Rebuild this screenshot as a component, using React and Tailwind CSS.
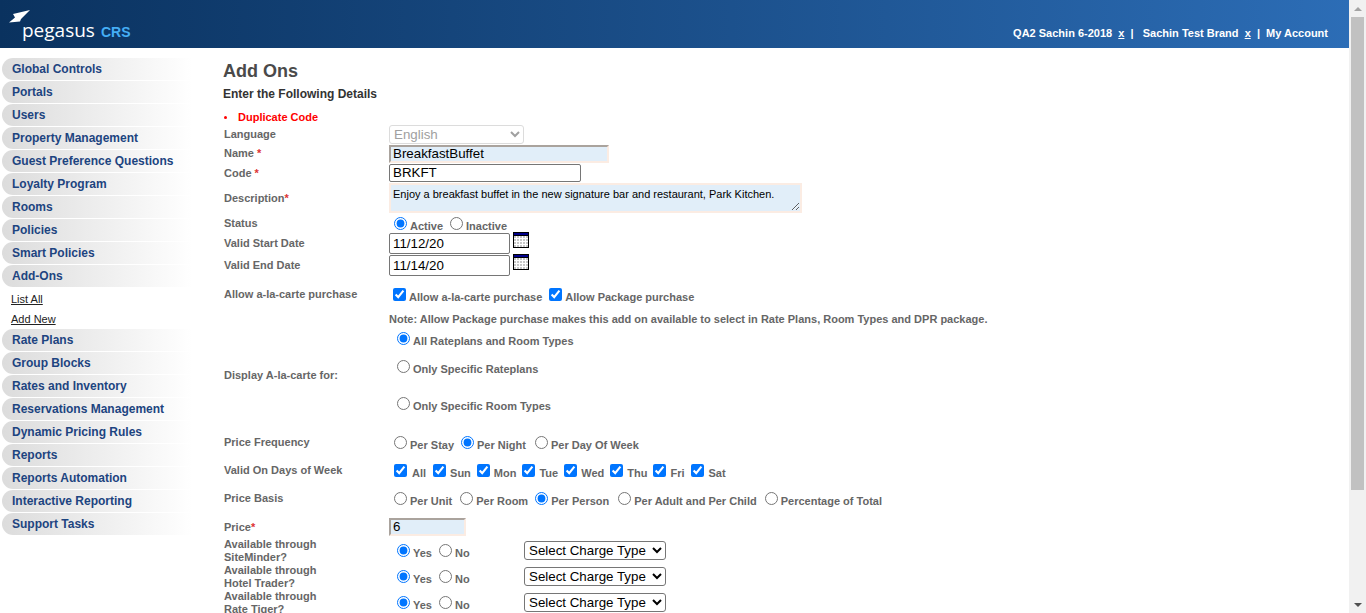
const menuTop = [
	"Global Controls",
	"Portals",
	"Users",
	"Property Management",
	"Guest Preference Questions",
	"Loyalty Program",
	"Rooms",
	"Policies",
	"Smart Policies",
	"Add-Ons",
];

const menuBottom = [
	"Rate Plans",
	"Group Blocks",
	"Rates and Inventory",
	"Reservations Management",
	"Dynamic Pricing Rules",
	"Reports",
	"Reports Automation",
	"Interactive Reporting",
	"Support Tasks",
];

const days = [
	["Sun", "mr-[6px]"],
	["Mon", "mr-[6px]"],
	["Tue", "mr-[6px]"],
	["Wed", "mr-[6px]"],
	["Thu", "mr-[6px]"],
	["Fri", "mr-[7px]"],
	["Sat", "mr-0"],
];

const MenuItem = ({ label }) => (
	<div className="h-[22px] mb-px rounded-l-[11px] bg-gradient-to-r from-[#dcdcdc] to-white flex items-center pl-[10px] text-[12px] font-bold text-[#1d4480]">
		{label}
	</div>
);

const Row = ({ label, h, children, star, labelClass = "", className = "" }) => (
	<div className={`flex ${h}`}>
		<div className={`w-[165px] shrink-0 flex items-center text-[11px] font-bold text-[#666] leading-[13px] ${labelClass}`}>
			<span>
				{label}
				{star && <span className="text-[#d33]">{star}</span>}
			</span>
		</div>
		<div className={`flex-1 flex items-center ${className}`}>{children}</div>
	</div>
);

const Radio = ({ name, label, checked, className = "" }) => (
	<label className={`inline-flex items-center text-[11px] font-bold text-[#666] ${className}`}>
		<input type="radio" name={name} defaultChecked={checked} className="mr-[3px] -mt-[3px]" />
		<span className="mt-[3px]">{label}</span>
	</label>
);

const Check = ({ label, className = "", textClass = "" }) => (
	<label className={`inline-flex items-center text-[11px] font-bold text-[#666] ${className}`}>
		<input type="checkbox" defaultChecked className="mr-[3px] -mt-[3px]" />
		<span className={`mt-[3px] ${textClass}`}>{label}</span>
	</label>
);

const CalendarIcon = () => (
	<svg width="16" height="16" viewBox="0 0 16 16" className="ml-[3px] -mt-[7px]">
		<rect width="16" height="16" fill="#000" />
		<rect x="1" y="1" width="14" height="2" fill="#00008b" />
		<rect x="1" y="4" width="14" height="11" fill="#c8c8c8" />
		<path d="M3.5 4v11M6.5 4v11M9.5 4v11M12.5 4v11M1 6.5h14M1 9.5h14M1 12.5h14" stroke="#fff" strokeWidth="1" />
	</svg>
);

const Channel = ({ id, first, second }) => (
	<div className="flex h-[26px]">
		<div className="w-[165px] shrink-0 flex items-center pt-[3px] text-[11px] font-bold text-[#666] leading-[13px]">
			<span>
				{first}
				<br />
				{second}
			</span>
		</div>
		<div className="flex-1 flex items-center pl-[8px]">
			<div className="w-[127px] flex items-center pt-[6px]">
				<Radio name={id} label="Yes" checked className="mr-[7px]" />
				<Radio name={id} label="No" />
			</div>
			<select className="h-[19px] w-[142px] mt-[2px] border border-[#767676] rounded-[3px] text-[13.33px] text-black">
				<option>Select Charge Type</option>
			</select>
		</div>
	</div>
);

const App = () => {
	return (
		<div className="flex h-screen overflow-hidden bg-white font-['Liberation_Sans',Arial,sans-serif]">
			<div className="flex-1 min-w-0 flex flex-col">
				{/* HEADER */}
				<header className="h-[48px] shrink-0 bg-gradient-to-r from-[#0a325f] to-[#2c6db6] flex justify-between">
					<div className="relative w-[200px]">
						<svg width="22" height="13" viewBox="0 0 22 13" className="absolute left-[9px] top-[10px]">
							<path d="M4 4 L21 0 L12 9 L11 11.5 L0 12.5 L6 7.5 Z" fill="#fff" />
						</svg>
						<div className="absolute left-[22px] top-[17px] flex items-baseline">
							<span className="font-['Open_Sans',sans-serif] text-[19px] font-medium leading-[26px] text-white">pegasus</span>
							<span className="ml-[6px] text-[14px] font-bold text-[#45aef5]">CRS</span>
						</div>
					</div>
					<div className="pt-[26px] pr-[21px] text-[11px] font-bold text-white leading-[14px] whitespace-pre">
						{"QA2 Sachin 6-2018  "}
						<span className="underline">x</span>
						{"  |   Sachin Test Brand  "}
						<span className="underline">x</span>
						{"  |  My Account"}
					</div>
				</header>

				<div className="flex-1 flex min-h-0">
					{/* SIDEBAR */}
					<nav className="w-[190px] ml-[2px] pt-[10px] shrink-0">
						{menuTop.map((m) => (
							<MenuItem key={m} label={m} />
						))}
						<div className="pl-[9px] pt-px text-[11px] text-[#222] leading-[20px]">
							<div className="underline">List All</div>
							<div className="underline">Add New</div>
						</div>
						{menuBottom.map((m) => (
							<MenuItem key={m} label={m} />
						))}
					</nav>

					{/* FORM */}
					<main className="flex-1 min-w-0 pl-[32px] pt-[13px] overflow-hidden">
						<h1 className="-ml-px text-[18px] font-bold text-[#4a4a4a] leading-[20px]">Add Ons</h1>
						<p className="-ml-px mt-[6px] text-[12px] font-bold text-[#333] leading-[14px]">Enter the Following Details</p>
						<div className="mt-[9px] h-[14px] flex items-center text-[11px] font-bold text-[#f00] leading-[14px]">
							<span className="w-[3px] h-[3px] rounded-full bg-[#f00] mr-[11px] mt-px"></span>
							Duplicate Code
						</div>

						<Row label="Language" h="h-[20px]">
							<select disabled className="h-[19px] w-[135px] border border-[#dcdcdc] rounded-[3px] text-[13.33px] text-[#a0a0a0]">
								<option>English</option>
							</select>
						</Row>
						<Row label="Name " star="*" h="h-[19px]">
							<input defaultValue="BreakfastBuffet" className="h-[18px] w-[220px] bg-[#e1eef9] border-2 border-[#fbece3] border-t-[#aaa39d] border-l-[#aaa39d] text-[13.33px] text-black pl-[2px]" />
						</Row>
						<Row label="Code " star="*" h="h-[19px]" labelClass="pt-[2px]">
							<input defaultValue="BRKFT" className="h-[18px] w-[192px] min-w-[192px] shrink-0 border border-[#767676] rounded-[2px] text-[13.33px] text-black pl-[3px]" />
						</Row>
						<Row label="Description" star="*" h="h-[31px]" labelClass="pt-[2px]">
							<textarea
								defaultValue="Enjoy a breakfast buffet in the new signature bar and restaurant, Park Kitchen."
								className="h-[30px] w-[413px] bg-[#e1eef9] border-2 border-[#fbece3] text-[11px] text-black pl-[2px] pt-[3px] leading-[13px]"
							/>
						</Row>
						<Row label="Status" h="h-[19px]" labelClass="pt-[2px]" className="pt-[4px]">
							<Radio name="status" label="Active" checked className="ml-[5px] mr-[7px]" />
							<Radio name="status" label="Inactive" />
						</Row>
						<Row label="Valid Start Date" h="h-[22px]">
							<input defaultValue="11/12/20" className="h-[21px] w-[121px] border border-[#767676] rounded-[2px] text-[13.33px] text-black pl-[3px]" />
							<CalendarIcon />
						</Row>
						<Row label="Valid End Date" h="h-[22px]">
							<input defaultValue="11/14/20" className="h-[21px] w-[121px] border border-[#767676] rounded-[2px] text-[13.33px] text-black pl-[3px]" />
							<CalendarIcon />
						</Row>

						<div className="flex mt-[8px] h-[22px]">
							<div className="w-[165px] shrink-0 flex items-center pb-[2px] text-[11px] font-bold text-[#666]">Allow a-la-carte purchase</div>
							<div className="flex-1 flex items-center pl-[4px] pt-[2px]">
								<Check label="Allow a-la-carte purchase" className="mr-[7px]" />
								<Check label="Allow Package purchase" />
							</div>
						</div>
						<div className="pl-[165px] mt-[6px] h-[14px] text-[11px] font-bold text-[#666] leading-[14px]">
							Note: Allow Package purchase makes this add on available to select in Rate Plans, Room Types and DPR package.
						</div>

						<div className="flex mt-px h-[91px]">
							<div className="w-[165px] shrink-0 flex items-center pt-[6px] text-[11px] font-bold text-[#666]">Display A-la-carte for:</div>
							<div className="flex-1 flex flex-col pl-[8px]">
								<div className="h-[26px] flex items-center"><Radio name="display" label="All Rateplans and Room Types" checked /></div>
								<div className="h-[28px] mt-[2px] flex items-center"><Radio name="display" label="Only Specific Rateplans" /></div>
								<div className="h-[28px] mt-[10px] flex items-center"><Radio name="display" label="Only Specific Room Types" /></div>
							</div>
						</div>

						<Row label="Price Frequency" h="h-[28px] mt-[10px]" className="pl-[5px] pt-[4px]">
							<Radio name="freq" label="Per Stay" className="mr-[7px]" />
							<Radio name="freq" label="Per Night" checked className="mr-[9px]" />
							<Radio name="freq" label="Per Day Of Week" />
						</Row>
						<Row label="Valid On Days of Week" h="h-[28px]" className="pl-[5px] pt-[4px]">
							<Check label="All" textClass="ml-[2px]" className="mr-[7px]" />
							{days.map(([d, gap]) => (
								<Check key={d} label={d} className={gap} textClass="ml-px" />
							))}
						</Row>
						<Row label="Price Basis" h="h-[28px]" className="pl-[5px] pt-[4px]">
							<Radio name="basis" label="Per Unit" className="mr-[8px]" />
							<Radio name="basis" label="Per Room" className="mr-[7px]" />
							<Radio name="basis" label="Per Person" checked className="mr-[9px]" />
							<Radio name="basis" label="Per Adult and Per Child" className="mr-[8px]" />
							<Radio name="basis" label="Percentage of Total" />
						</Row>
						<Row label="Price" star="*" h="h-[19px] mt-[5px]" labelClass="pt-[2px]">
							<input defaultValue="6" className="h-[18px] w-[77px] bg-[#e1eef9] border-2 border-[#fbece3] border-t-[#aaa39d] border-l-[#aaa39d] text-[13.33px] text-black pl-[2px]" />
						</Row>
						<Channel id="site" first="Available through" second="SiteMinder?" />
						<Channel id="hotel" first="Available through" second="Hotel Trader?" />
						<Channel id="rate" first="Available through" second="Rate Tiger?" />
					</main>
				</div>
			</div>

			{/* SCROLLBAR */}
			<div className="w-[17px] shrink-0 bg-[#f1f1f1] flex flex-col items-center">
				<div className="h-[17px] flex items-center justify-center">
					<div className="w-0 h-0 border-x-[4px] border-x-transparent border-b-[4px] border-b-[#a3a3a3]"></div>
				</div>
				<div className="w-[13px] h-[473px] bg-[#c1c1c1]"></div>
				<div className="flex-1"></div>
				<div className="h-[17px] flex items-center justify-center">
					<div className="w-0 h-0 border-x-[4px] border-x-transparent border-t-[4px] border-t-[#505050]"></div>
				</div>
			</div>
		</div>
	);
};

export default App;
